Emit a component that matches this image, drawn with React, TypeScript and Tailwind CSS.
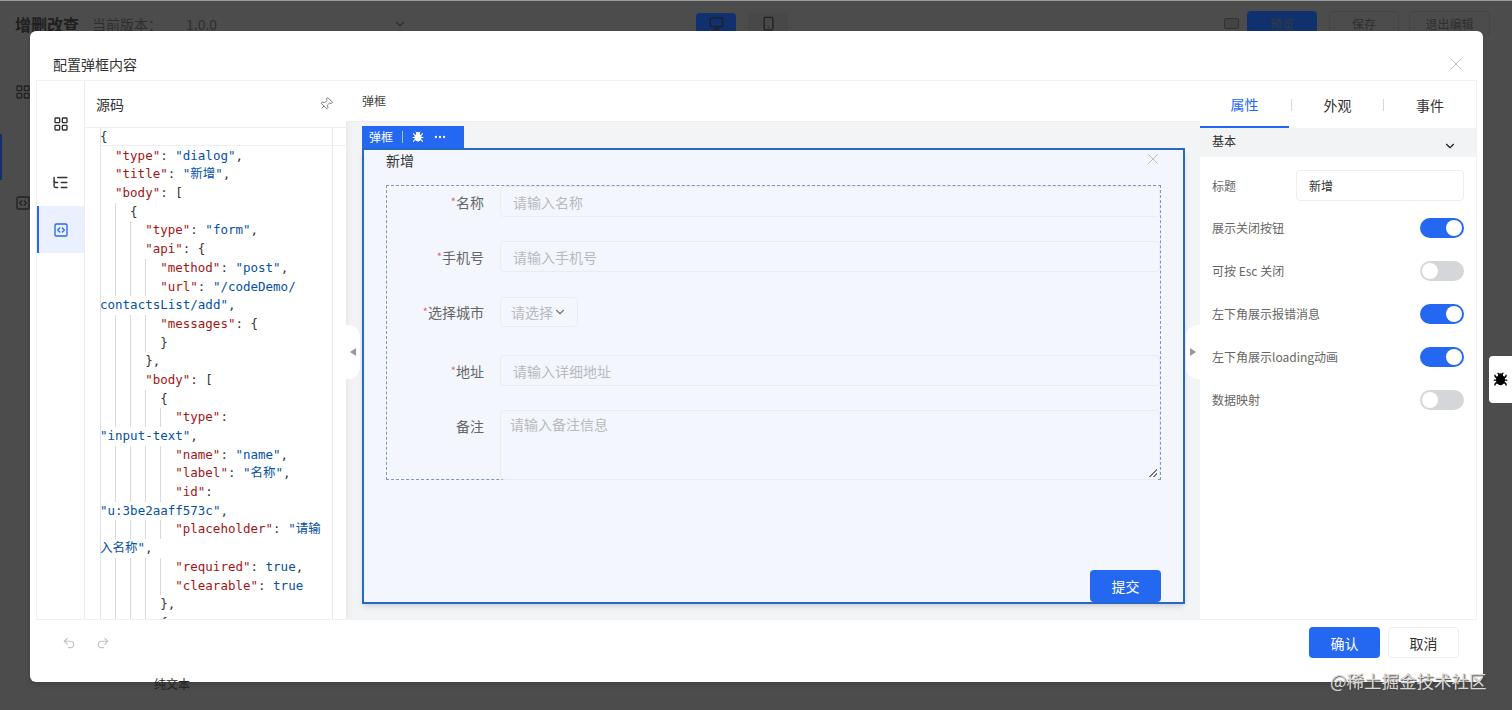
import { useMemo } from "react";
import {
  Bug,
  ChevronDown,
  Ellipsis,
  LayoutGrid,
  ListTree,
  Monitor,
  Pin,
  Redo2,
  Smartphone,
  SquareCode,
  Undo2,
  X,
} from "lucide-react";

const sans = `font-["Noto_Sans_CJK_SC","Noto_Sans",sans-serif]`;

// indent counts spaces, a line with indent -1 is the tail of a wrapped line
const codeLines: [number, string][] = [
  [0, "{"],
  [2, '"type": "dialog",'],
  [2, '"title": "新增",'],
  [2, '"body": ['],
  [4, "{"],
  [6, '"type": "form",'],
  [6, '"api": {'],
  [8, '"method": "post",'],
  [8, '"url": "/codeDemo/'],
  [-1, 'contactsList/add",'],
  [8, '"messages": {'],
  [8, "}"],
  [6, "},"],
  [6, '"body": ['],
  [8, "{"],
  [10, '"type":'],
  [-1, '"input-text",'],
  [10, '"name": "name",'],
  [10, '"label": "名称",'],
  [10, '"id":'],
  [-1, '"u:3be2aaff573c",'],
  [10, '"placeholder": "请输'],
  [-1, '入名称",'],
  [10, '"required": true,'],
  [10, '"clearable": true'],
  [8, "},"],
  [8, "{"],
];

function tokenize(text: string, wrapped: boolean) {
  const m = text.match(/^("[^"]*")(:)(.*)$/);
  if (m) {
    return [
      { t: m[1], c: "text-[#a31515]" },
      { t: m[2], c: "text-[#333]" },
      ...tokenize(m[3], true),
    ];
  }
  const v = text.match(/^(\s*)([^,{}[\]]+)(.*)$/);
  if (v && (wrapped || v[2].includes('"'))) {
    return [
      { t: v[1] + v[2], c: "text-[#0451a5]" },
      { t: v[3], c: "text-[#333]" },
    ];
  }
  return [{ t: text, c: text.includes("[") ? "text-[#0451a5]" : "text-[#333]" }];
}

function CodeLine({ indent, text }: { indent: number; text: string }) {
  const levels = indent > 0 ? indent / 2 : 0;
  const tokens = useMemo(() => tokenize(text, indent < 0), [text, indent]);
  return (
    <div className="flex h-[18.7px] leading-[18.7px] whitespace-pre">
      {Array.from({ length: levels }).map((_, i) => (
        <span
          key={i}
          className={`h-full w-[15.06px] shrink-0 ${i > 0 ? "border-l border-[#d9d9d9]" : ""}`}
        />
      ))}
      <span>
        {tokens.map((tk, i) => (
          <span key={i} className={tk.c}>
            {tk.t}
          </span>
        ))}
      </span>
    </div>
  );
}

function Toggle({ on }: { on?: boolean }) {
  return (
    <div
      className={`flex h-5 w-[44px] items-center rounded-full px-0.5 ${
        on ? "justify-end bg-[#2468f2]" : "justify-start bg-[#d4d6d9]"
      }`}
    >
      <div className="size-4 rounded-full bg-white" />
    </div>
  );
}

function SideTab({ children, active }: { children: React.ReactNode; active?: boolean }) {
  return (
    <div
      className={`flex h-[47px] items-center justify-center ${
        active ? "border-l-2 border-[#2468f2] bg-[#eaf0fe] pr-0.5 text-[#2468f2]" : "text-[#333]"
      }`}
    >
      {children}
    </div>
  );
}

function Req() {
  return <span className="text-[11px] text-[#e0637a]">*</span>;
}

function FieldInput({ label, required, holder, className }: { label: string; required?: boolean; holder: string; className: string }) {
  return (
    <div className={`flex ${className}`}>
      <div className="flex h-[31px] w-[97px] items-center justify-end text-sm text-[#666]">
        {required && <Req />}
        {label}
      </div>
      <div className="ml-4 flex h-[31px] flex-1 items-center rounded-[4px] border border-[#e8ecf4] pl-3 text-sm text-[#b8babf]">
        {holder}
      </div>
    </div>
  );
}

function Handle({ side }: { side: "left" | "right" }) {
  return (
    <div
      className={`absolute top-[244px] flex h-[54px] w-[14px] items-center justify-center bg-white ${
        side === "left" ? "left-0 rounded-r-xl" : "right-0 rounded-l-xl"
      }`}
    >
      <span
        className={`size-0 border-y-[4px] border-y-transparent ${
          side === "left" ? "border-r-[6px] border-r-[#999]" : "border-l-[6px] border-l-[#999]"
        }`}
      />
    </div>
  );
}

export default function App() {
  return (
    <div className={`relative h-[710px] w-[1512px] overflow-hidden bg-[#4c4c4c] ${sans}`}>
      {/* dimmed page behind the dialog */}
      <header className="flex h-[46px] items-center border-t border-[#9a9a9a] pl-[15px] pr-[22px] text-[#2e2e2e]">
        <span className="text-base font-bold text-[#1f1f1f]">增删改查</span>
        <span className="ml-[13px] text-sm">当前版本：</span>
        <span className="ml-6 text-sm">1.0.0</span>
        <ChevronDown size={14} className="ml-[176px]" />
        <div className="ml-[289px] flex h-[22px] w-10 items-center justify-center rounded-[4px] bg-[#10306e] text-[#1f1f1f]">
          <Monitor size={15} />
        </div>
        <div className="ml-3 flex h-[22px] w-10 items-center justify-center rounded-[4px] bg-[#484848] text-[#1f1f1f]">
          <Smartphone size={15} />
        </div>
        <div className="ml-auto mr-2 h-[11px] w-[15px] rounded-[2px] border border-[#333] bg-[#444]" />
        <div className="flex h-[25px] w-[70px] items-center justify-center rounded-[4px] bg-[#10306e] text-xs text-[#3a3a3a]">预览</div>
        <div className="ml-3 flex h-[25px] w-[70px] items-center justify-center rounded-[4px] border border-[#454545] text-xs">保存</div>
        <div className="ml-[10px] flex h-[25px] w-[81px] items-center justify-center rounded-[4px] border border-[#454545] text-xs">退出编辑</div>
      </header>
      <aside className="flex w-[46px] flex-col items-center pt-[38px] text-[#222]">
        <LayoutGrid size={16} />
        <div className="mt-[34px] h-[46px] w-full border-l-2 border-[#10306e]" />
        <SquareCode size={16} className="mt-[15px]" />
      </aside>

      {/* dialog */}
      <div className="absolute left-[30px] top-[31px] flex h-[651px] w-[1453px] flex-col rounded-md bg-white pl-[6px] pr-[6px] shadow-md">
        <div className="flex h-[49px] shrink-0 items-center justify-between pl-[17px] pr-[11px] pt-[17px] text-sm text-[#333]">
          <span className="font-normal">配置弹框内容</span>
          <X size={20} strokeWidth={1.2} className="text-[#bdbdbd]" />
        </div>
        <div className="flex h-[540px] shrink-0 overflow-hidden border border-[#f1f1f1]">
          <nav className="flex w-[48px] shrink-0 flex-col border-r border-[#ececec] pt-[19px]">
            <SideTab>
              <LayoutGrid size={16} />
            </SideTab>
            <div className="mt-[12px]">
              <SideTab>
                <ListTree size={17} />
              </SideTab>
            </div>
            <div className="mt-[0px]">
              <SideTab active>
                <SquareCode size={16} />
              </SideTab>
            </div>
          </nav>
          <section className="flex w-[261px] shrink-0 flex-col">
            <div className="flex h-[46px] shrink-0 items-center justify-between pl-[11px] pr-[13px] text-sm text-[#333]">
              <span>源码</span>
              <Pin size={14} strokeWidth={1.2} className="rotate-45 text-[#555]" />
            </div>
            <div className="relative flex-1 overflow-hidden border-t border-[#eeeeee] pl-[15px] font-['DejaVu_Sans_Mono','Noto_Sans_CJK_SC',monospace] text-[12.5px]">
              <div className="absolute left-[15px] right-0 top-0 h-[18px] border-b border-[#f0f0f0]" />
              <div className="absolute inset-y-0 left-[15px] w-px bg-[#e2e2e2]" />
              <div className="absolute inset-y-0 left-[247px] w-px bg-[#e6e6e6]" />
              <div className="relative">
                {codeLines.map(([indent, text], i) => (
                  <CodeLine key={i} indent={indent} text={text} />
                ))}
              </div>
            </div>
          </section>
          <main className="relative flex flex-1 flex-col bg-[#f3f4f6] shadow-[inset_8px_0_8px_-8px_rgba(0,0,0,0.08)]">
            <div className="flex h-[41px] shrink-0 items-center border-b border-[#eeeeee] bg-white pl-4 text-xs text-[#444]">弹框</div>
            <div className="flex min-h-0 flex-1 flex-col pl-4 pr-[15px] pt-[4px]">
              <div className="flex h-[22px] w-[102px] shrink-0 items-center bg-[#2468f2] pl-[7px] text-xs text-white">
                <span>弹框</span>
                <span className="ml-[9px] h-3 w-px bg-[#9dbcf8]" />
                <Bug size={12} className="ml-[9px]" fill="currentColor" />
                <Ellipsis size={14} className="ml-[9px]" />
              </div>
              <div className="flex h-[456px] shrink-0 flex-col border-2 border-[#2468c8] bg-[#f3f6fd] pl-[22px] pr-[22px] shadow-md">
                <div className="flex h-[35px] shrink-0 items-start justify-between text-sm text-[#333]">
                  <span>新增</span>
                  <X size={18} strokeWidth={1.2} className="mr-[-1px] text-[#b5b5b5]" />
                </div>
                <form className="h-[295px] shrink-0 border border-dashed border-[#7f96bf]">
                  <FieldInput label="名称" required holder="请输入名称" className="mb-6" />
                  <FieldInput label="手机号" required holder="请输入手机号" className="mb-[25px]" />
                  <div className="mb-[28px] flex">
                    <div className="flex h-[30px] w-[97px] items-center justify-end text-sm text-[#666]">
                      <Req />
                      选择城市
                    </div>
                    <div className="ml-4 flex h-[30px] w-[78px] items-center justify-center rounded-[4px] border border-[#e8ecf4] text-sm text-[#b8babf]">
                      请选择
                      <ChevronDown size={14} className="text-[#777]" />
                    </div>
                  </div>
                  <FieldInput label="地址" required holder="请输入详细地址" className="mb-6" />
                  <div className="flex">
                    <div className="flex h-[31px] w-[97px] items-center justify-end text-sm text-[#666]">备注</div>
                    <div className="relative ml-4 h-[70px] flex-1 rounded-[4px] border border-[#e8ecf4] pl-[9px] pt-[3px] text-sm text-[#b8babf]">
                      请输入备注信息
                      <span className="absolute bottom-0.5 right-0.5 size-2 bg-[linear-gradient(135deg,transparent_50%,#777_50%,#777_60%,transparent_60%,transparent_75%,#777_75%,#777_85%,transparent_85%)]" />
                    </div>
                  </div>
                </form>
                <div className="mt-auto flex justify-end">
                  <button className="h-[32px] w-[71px] rounded-[4px] bg-[#2468f2] text-sm text-white">提交</button>
                </div>
              </div>
            </div>
            <Handle side="left" />
            <Handle side="right" />
          </main>
          <aside className="flex w-[276px] shrink-0 flex-col">
            <div className="flex h-[47px] shrink-0 items-center text-sm text-[#333]">
              <div className="flex h-full w-[89px] items-center justify-center border-b-2 border-[#2468f2] text-[#2468f2]">属性</div>
              <span className="ml-[2px] h-3 w-px bg-[#d9d9d9]" />
              <div className="flex h-full w-[91px] items-center justify-center">外观</div>
              <span className="h-3 w-px bg-[#d9d9d9]" />
              <div className="flex h-full flex-1 items-center justify-center">事件</div>
            </div>
            <div className="flex h-[29px] shrink-0 items-center justify-between bg-[#f2f3f5] pl-3 pr-[19px] text-xs text-[#333]">
              <span className="-translate-y-0.5">基本</span>
              <ChevronDown size={14} className="translate-y-[3px] text-[#222]" />
            </div>
            <div className="px-3 pt-[13px] text-xs text-[#666]">
              <div className="flex items-center justify-between">
                <span>标题</span>
                <div className="flex h-[31px] w-[168px] items-center rounded-[4px] border border-[#eeeeee] pl-3 text-[#333]">新增</div>
              </div>
              <div className="mt-[17px] flex flex-col gap-[23px]">
                {[
                  ["展示关闭按钮", true],
                  ["可按 Esc 关闭", false],
                  ["左下角展示报错消息", true],
                  ["左下角展示loading动画", true],
                  ["数据映射", false],
                ].map(([label, on]) => (
                  <div key={label as string} className="flex h-5 items-center justify-between">
                    <span>{label}</span>
                    <Toggle on={on as boolean} />
                  </div>
                ))}
              </div>
            </div>
          </aside>
        </div>
        <div className="flex flex-1 items-start pl-[26px] pr-[18px] pt-[7px]">
          <div className="flex h-[31px] items-center gap-5 text-[#c4c4c4]">
            <Undo2 size={14} strokeWidth={2} />
            <Redo2 size={14} strokeWidth={2} />
          </div>
          <button className="ml-auto h-[31px] w-[71px] rounded-[4px] bg-[#2468f2] text-sm text-white">确认</button>
          <button className="ml-[8px] h-[31px] w-[71px] rounded-[4px] border border-[#eeeeee] text-sm text-[#333]">取消</button>
        </div>
      </div>

      {/* bits of the page that sit over the mask */}
      <div className="absolute right-0 top-[356px] flex h-[47px] w-[23px] items-center justify-center rounded-l bg-white text-black">
        <Bug size={15} fill="currentColor" />
      </div>
      <span className="absolute left-[154px] top-[676px] text-xs text-[#222]">纯文本</span>
      <span className="absolute left-[1330px] top-[668px] text-[17.5px] text-[#d8d8d8] [text-shadow:1px_1px_1px_#444]">@稀土掘金技术社区</span>
    </div>
  );
}
